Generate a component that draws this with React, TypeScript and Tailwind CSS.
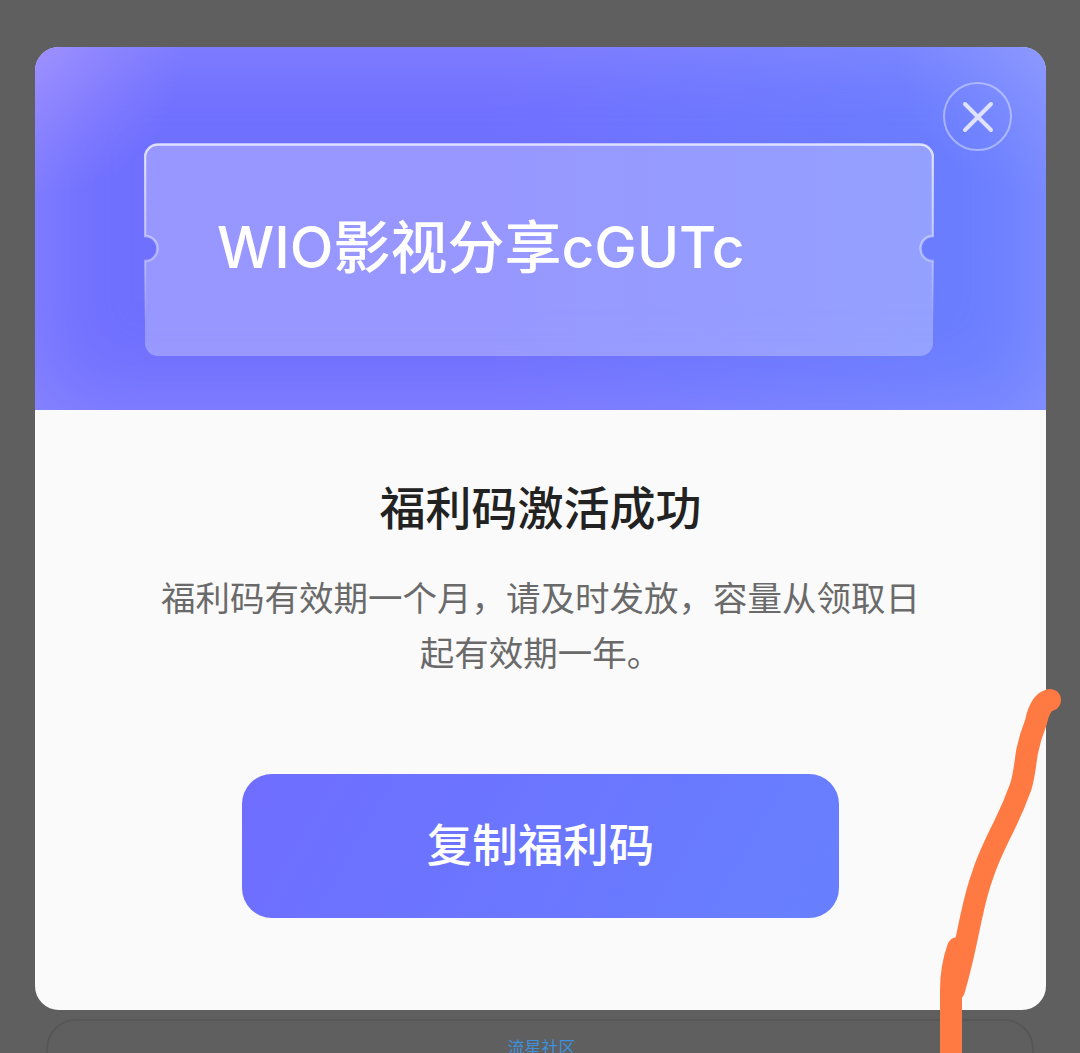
const cjk = "font-['Noto_Sans_CJK_SC','Noto_Sans',sans-serif]"

const Ticket = () => {
  return (
    <div className="relative w-[790px] h-[213px] flex items-center pl-[73px] pb-[4px]">
      <svg className="absolute inset-0" width="790" height="213" viewBox="0 0 790 213" fill="none">
        <defs>
          <linearGradient id="edge" x1="0" y1="0" x2="0" y2="213" gradientUnits="userSpaceOnUse">
            <stop offset="0" stopColor="#ffffff" stopOpacity="0.75" />
            <stop offset="0.5" stopColor="#ffffff" stopOpacity="0.4" />
            <stop offset="0.85" stopColor="#ffffff" stopOpacity="0" />
          </linearGradient>
        </defs>
        <path
          d="M14 1.5H776A13 13 0 0 1 789 14V93A12.5 12.5 0 0 0 789 118V200A13 13 0 0 1 776 213H14A13 13 0 0 1 1 200V118A12.5 12.5 0 0 0 1 93V14A13 13 0 0 1 14 1.5Z"
          fill="#ffffff"
          fillOpacity="0.28"
          stroke="url(#edge)"
          strokeWidth="2.5"
        />
      </svg>
      <div className="relative text-white text-[57px] leading-none font-medium font-['Inter','Noto_Sans_CJK_SC',sans-serif]">WIO影视分享cGUTc</div>
    </div>
  )
}

const App = () => {
  return (
    <div className={`relative w-[1080px] h-[1053px] overflow-hidden bg-[#5f5f5f] pt-[47px] px-[35px] ${cjk}`}>
      <div className="w-[1011px] h-[963px] rounded-[24px] overflow-hidden flex flex-col bg-[#fafafa]">
        <div className="relative h-[363px] pt-[96px] pl-[109px] bg-[radial-gradient(circle_at_0%_0%,rgba(175,150,255,0.55),transparent_150px),radial-gradient(circle_at_100%_0%,rgba(170,180,255,0.3),transparent_150px),linear-gradient(90deg,#7070ff,#7070ff_45%,#6a80ff)] shadow-[inset_0_0_90px_rgba(190,180,255,0.36)]">
          <Ticket />
          <button className="absolute top-[35px] right-[34px] w-[69px] h-[69px] rounded-full border-2 border-white/40 flex items-center justify-center">
            <svg width="32" height="32" viewBox="0 0 32 32" fill="none" stroke="#dfe3ff" strokeWidth="4" strokeLinecap="round">
              <path d="M3 3L29 29M29 3L3 29" />
            </svg>
          </button>
        </div>
        <div className="flex-1 flex flex-col items-center">
          <div className="mt-[68px] text-[46px] leading-[54px] font-medium text-[#222222]">福利码激活成功</div>
          <div className="mt-[37px] w-[770px] text-center text-[34.5px] leading-[55px] text-[#6a6a6a]">
            福利码有效期一个月，请及时发放，容量从领取日起有效期一年。
          </div>
          <button className="mt-[95px] w-[597px] h-[144px] pb-[7px] rounded-[30px] bg-[linear-gradient(120deg,#6f6dff,#6780ff)] text-white text-[45.5px] font-medium">
            复制福利码
          </button>
        </div>
      </div>
      <div className="mt-[9px] mx-[11px] h-[80px] rounded-[30px] border-2 border-[#575757] flex justify-center pt-[14px] pl-[3px]">
        <div className="text-[17px] leading-[24px] text-[#3d90dc]">流星社区</div>
      </div>
      <svg className="absolute inset-0" width="1080" height="1053" viewBox="0 0 1080 1053" fill="none" stroke="#ff7a42" strokeLinecap="round" strokeLinejoin="round">
        <path
          strokeWidth="22"
          d="M1050 700C1042 702 1038 712 1036 722C1032 732 1029 742 1027 752C1025 766 1024 776 1021 786C1016 800 1010 814 1004 826C996 842 988 858 983 874C977 890 974 904 971 918C967 936 963 960 954 990"
        />
        <path strokeWidth="22" d="M958 948C953 962 951 975 951 990V1060" />
      </svg>
    </div>
  )
}

export default App
